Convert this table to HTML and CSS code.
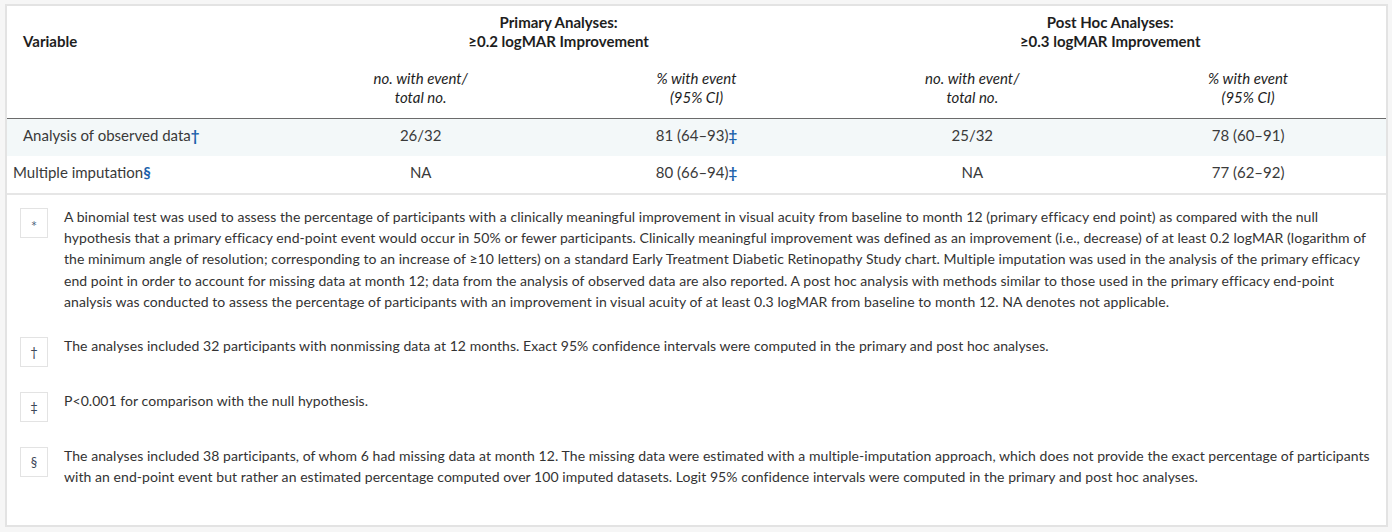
FILE: index.html
```html
<!DOCTYPE html>
<html lang="en">
<head>
<meta charset="utf-8">
<title>Table</title>
<link rel="stylesheet" href="styles.css">
</head>
<body>
<div class="card">
  <table class="data">
    <colgroup>
      <col class="c"><col class="c"><col class="c"><col class="c"><col class="c">
    </colgroup>
    <thead>
      <tr class="h1">
        <th class="var">Variable</th>
        <th colspan="2">Primary Analyses:<br>≥0.2 logMAR Improvement</th>
        <th colspan="2">Post Hoc Analyses:<br>≥0.3 logMAR Improvement</th>
      </tr>
      <tr class="h2">
        <th></th>
        <th>no. with event/<br>total no.</th>
        <th>% with event<br>(95% CI)</th>
        <th>no. with event/<br>total no.</th>
        <th>% with event<br>(95% CI)</th>
      </tr>
    </thead>
    <tbody>
      <tr class="shade">
        <td class="var">Analysis of observed data<span class="mark">†</span></td>
        <td>26/32</td>
        <td>81 (64–93)<span class="mark">‡</span></td>
        <td>25/32</td>
        <td>78 (60–91)</td>
      </tr>
      <tr>
        <td class="var tight">Multiple imputation<span class="mark">§</span></td>
        <td>NA</td>
        <td>80 (66–94)<span class="mark">‡</span></td>
        <td>NA</td>
        <td>77 (62–92)</td>
      </tr>
    </tbody>
  </table>
  <div class="notes">
    <div class="note">
      <span class="sym star">*</span>
      <p>A binomial test was used to assess the percentage of participants with a clinically meaningful improvement in visual acuity from baseline to month 12 (primary efficacy end point) as compared with the null hypothesis that a primary efficacy end-point event would occur in 50% or fewer participants. Clinically meaningful improvement was defined as an improvement (i.e., decrease) of at least 0.2 logMAR (logarithm of the minimum angle of resolution; corresponding to an increase of ≥10 letters) on a standard Early Treatment Diabetic Retinopathy Study chart. Multiple imputation was used in the analysis of the primary efficacy end point in order to account for missing data at month 12; data from the analysis of observed data are also reported. A post hoc analysis with methods similar to those used in the primary efficacy end-point analysis was conducted to assess the percentage of participants with an improvement in visual acuity of at least 0.3 logMAR from baseline to month 12. NA denotes not applicable.</p>
    </div>
    <div class="note">
      <span class="sym">†</span>
      <p>The analyses included 32 participants with nonmissing data at 12 months. Exact 95% confidence intervals were computed in the primary and post hoc analyses.</p>
    </div>
    <div class="note">
      <span class="sym">‡</span>
      <p>P&lt;0.001 for comparison with the null hypothesis.</p>
    </div>
    <div class="note">
      <span class="sym">§</span>
      <p>The analyses included 38 participants, of whom 6 had missing data at month 12. The missing data were estimated with a multiple-imputation approach, which does not provide the exact percentage of participants with an end-point event but rather an estimated percentage computed over 100 imputed datasets. Logit 95% confidence intervals were computed in the primary and post hoc analyses.</p>
    </div>
  </div>
</div>
</body>
</html>
```

FILE: styles.css
```css
html, body {
  margin: 0;
  padding: 0;
  background: #f6f6f6;
}
body {
  padding: 4px 4px 5px 5px;
  font-family: "Lato", "Noto Sans", sans-serif;
  color: #333;
}
.card {
  background: #fff;
  border: 2px solid #e3e3e3;
  box-sizing: border-box;
  height: 523px;
}
.data {
  width: 100%;
  border-collapse: collapse;
  table-layout: fixed;
  font-size: 15px;
}
.data th, .data td {
  padding: 0 16px;
  line-height: 19px;
  text-align: center;
  vertical-align: bottom;
}
.data th {
  color: #1e1e1e;
}
.data .h1 th {
  font-weight: 700;
  padding-top: 7px;
  padding-bottom: 9px;
}
.data .h2 th {
  font-weight: 400;
  font-style: italic;
  padding-top: 9px;
  padding-bottom: 11px;
}
.data thead {
  border-bottom: 1px solid #6b6b6b;
}
.data .var {
  text-align: left;
}
.data td {
  padding-top: 7px;
  padding-bottom: 11px;
  vertical-align: middle;
  color: #3a3a3a;
}
.data td.tight {
  padding-left: 6px;
}
.data tbody tr.shade td {
  background: #f3f8f9;
}
.data tbody {
  border-bottom: 2px solid #e6e6e6;
}
.mark {
  color: #1b62ab;
  font-weight: 700;
}
.notes {
  padding: 11px 6px 0 13px;
}
.note {
  display: flex;
  align-items: flex-start;
  gap: 16px;
  margin-bottom: 23px;
}
.sym {
  flex: 0 0 auto;
  width: 28px;
  height: 30px;
  box-sizing: border-box;
  border: 1px solid #e3e3e3;
  display: flex;
  align-items: center;
  justify-content: center;
  font-size: 13px;
  color: #3c4658;
  margin-top: 2px;
}
.sym.star {
  font-family: "DejaVu Sans", sans-serif;
  font-size: 10px;
  padding-top: 4px;
  color: #4a5a7a;
}
.note p {
  margin: 0;
  font-size: 14px;
  line-height: 21.2px;
  letter-spacing: 0.06px;
  color: #333;
}
```
